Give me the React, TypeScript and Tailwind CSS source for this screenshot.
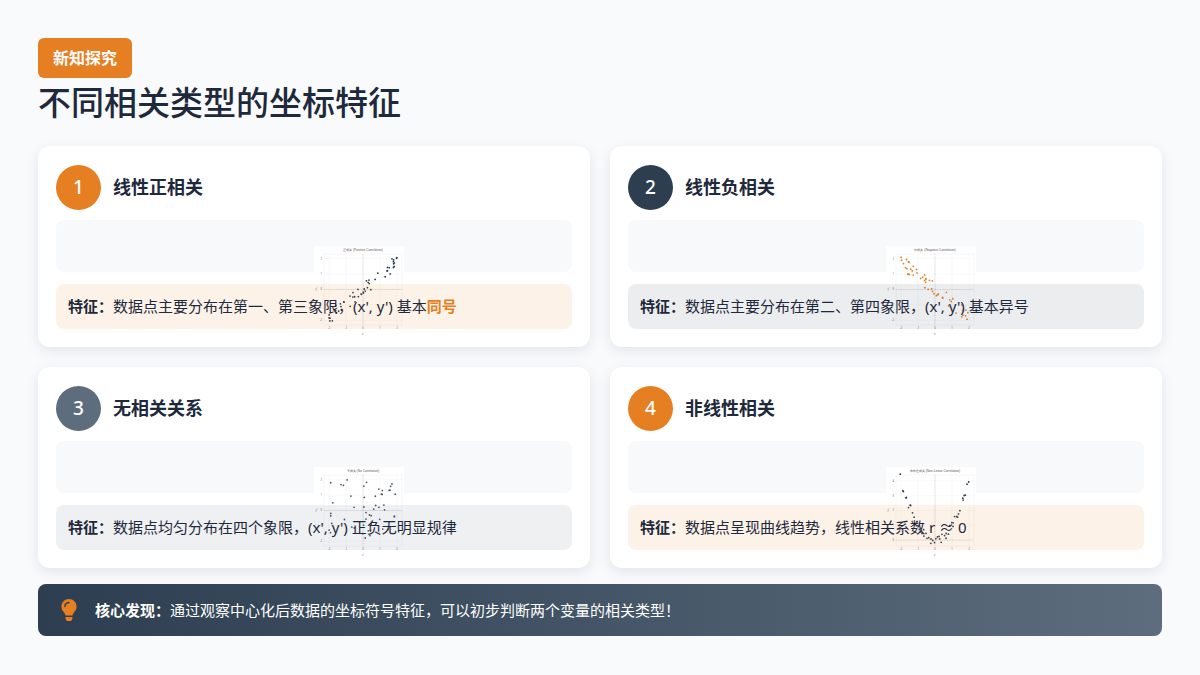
import { FaLightbulb } from "react-icons/fa";

type Kind = "pos" | "neg" | "none" | "curve";

function seeded(seed: number) {
  let s = seed;
  return () => {
    s = (s * 16807) % 2147483647;
    return (s - 1) / 2147483646;
  };
}

function makePoints(kind: Kind) {
  const r = seeded(kind === "pos" ? 11 : kind === "neg" ? 29 : kind === "none" ? 47 : 83);
  const pts: [number, number][] = [];
  for (let i = 0; i < 50; i++) {
    if (kind === "curve") {
      const x = -2 + 4 * (i / 49) + (r() - 0.5) * 0.1;
      pts.push([x, x * x + (r() - 0.5) * 0.6]);
    } else if (kind === "none") {
      pts.push([-2 + 4 * r(), -2 + 4 * r()]);
    } else {
      const x = -2 + 4 * r();
      const y = (kind === "pos" ? 0.9 : -0.9) * x + (r() - 0.5) * 0.9;
      pts.push([x, y]);
    }
  }
  return pts;
}

const titles: Record<Kind, string> = {
  pos: "正相关 (Positive Correlation)",
  neg: "负相关 (Negative Correlation)",
  none: "无相关 (No Correlation)",
  curve: "非线性相关 (Non-Linear Correlation)",
};

function Scatter({ kind }: { kind: Kind }) {
  const pts = makePoints(kind);
  const [ymin, ymax] = kind === "curve" ? [-0.4, 4.4] : [-2.3, 2.3];
  const px = (x: number) => 10 + ((x + 2.3) / 4.6) * 78;
  const py = (y: number) => 79 - ((y - ymin) / (ymax - ymin)) * 71;
  const dot = kind === "neg" ? "#e67e22" : kind === "none" ? "#4a5a6b" : "#2c3e50";
  const ticks = [-2, -1, 0, 1, 2];
  const yticks = kind === "curve" ? [0, 1, 2, 3, 4] : ticks;
  return (
    <svg width="90" height="90" viewBox="0 0 90 90" className="block">
      <rect x="0" y="0" width="90" height="90" fill="#ffffff" />
      <text x="49" y="5" fontSize="3.2" fill="#555" textAnchor="middle" fontFamily="'Liberation Sans', sans-serif">
        {titles[kind]}
      </text>
      <rect x="10" y="8" width="78" height="71" fill="none" stroke="#e5e5e5" strokeWidth="0.3" />
      {ticks.map((t) => (
        <g key={"x" + t}>
          <line x1={px(t)} y1="8" x2={px(t)} y2="79" stroke="#eeeeee" strokeWidth="0.3" />
          <text x={px(t)} y="83" fontSize="2.6" fill="#666" textAnchor="middle">{t}</text>
        </g>
      ))}
      {yticks.map((t) => (
        <g key={"y" + t}>
          <line x1="10" y1={py(t)} x2="88" y2={py(t)} stroke="#eeeeee" strokeWidth="0.3" />
          <text x="8" y={py(t) + 0.9} fontSize="2.6" fill="#666" textAnchor="end">{t}</text>
        </g>
      ))}
      <line x1={px(0)} y1="8" x2={px(0)} y2="79" stroke="#999" strokeWidth="0.35" strokeDasharray="1 0.7" />
      <line x1="10" y1={py(0)} x2="88" y2={py(0)} stroke="#999" strokeWidth="0.35" strokeDasharray="1 0.7" />
      {pts.map(([x, y], i) => (
        <circle key={i} cx={px(x)} cy={py(y)} r="0.9" fill={dot} />
      ))}
      <text x={px(0)} y="88.5" fontSize="2.6" fill="#666" textAnchor="middle">x'</text>
      <text x="1.5" y={py(kind === "curve" ? 2 : 0)} fontSize="2.6" fill="#666">y'</text>
    </svg>
  );
}

interface CardProps {
  num: string;
  circle: string;
  title: string;
  kind: Kind;
  tint: string;
  children: React.ReactNode;
}

function Card({ num, circle, title, kind, tint, children }: CardProps) {
  return (
    <div className="bg-white rounded-xl p-[18px] shadow-[0_4px_14px_rgba(15,23,42,0.09)]">
      <div className="flex items-center h-[46px]">
        <div className={`w-[45px] h-[45px] rounded-full flex items-center justify-center text-white text-[19px] font-medium ${circle}`}>
          {num}
        </div>
        <h3 className="ml-3 text-[18px] font-bold text-[#1e293b]">{title}</h3>
      </div>
      <div className="relative mt-[10px] h-[52px] rounded-lg bg-[#f8f9fb]">
        <div className="absolute left-1/2 top-1/2 z-10">
          <Scatter kind={kind} />
        </div>
      </div>
      <div className={`relative z-20 mt-3 h-[45px] rounded-lg px-3 flex items-center text-[15px] text-[#1e293b] ${tint}`}>
        <p>
          <span className="font-bold">特征：</span>
          {children}
        </p>
      </div>
    </div>
  );
}

export default function App() {
  return (
    <div
      className="w-[1200px] h-[675px] overflow-hidden bg-[#f8fafc] px-[38px] pt-[38px]"
      style={{ fontFamily: "'Noto Sans', 'Noto Sans CJK SC', sans-serif" }}
    >
      <span className="inline-block rounded-md bg-[#e67e22] px-[15px] py-2 text-[16px] leading-6 font-bold text-white">
        新知探究
      </span>
      <h1 className="mt-[4px] text-[33px] leading-[42px] font-medium text-[#1e293b]">不同相关类型的坐标特征</h1>

      <div className="mt-[22px] grid grid-cols-2 gap-5">
        <Card num="1" circle="bg-[#e67e22]" title="线性正相关" kind="pos" tint="bg-[#e67e22]/10">
          数据点主要分布在第一、第三象限，(x', y') 基本<span className="font-bold text-[#e67e22]">同号</span>
        </Card>
        <Card num="2" circle="bg-[#2c3e50]" title="线性负相关" kind="neg" tint="bg-[#5d6d7e]/[0.12]">
          数据点主要分布在第二、第四象限，(x', y') 基本异号
        </Card>
        <Card num="3" circle="bg-[#5d6d7e]" title="无相关关系" kind="none" tint="bg-[#5d6d7e]/[0.1]">
          数据点均匀分布在四个象限，(x', y') 正负无明显规律
        </Card>
        <Card num="4" circle="bg-[#e67e22]" title="非线性相关" kind="curve" tint="bg-[#e67e22]/10">
          数据点呈现曲线趋势，线性相关系数 r ≈ 0
        </Card>
      </div>

      <div className="mt-4 h-[52px] rounded-lg bg-gradient-to-r from-[#2c3e50] to-[#5d6d7e] flex items-center pl-[20px] text-[15px] text-white">
        <FaLightbulb className="text-[#e67e22]" size={22} />
        <p className="ml-[15px]">
          <span className="font-bold">核心发现：</span>
          通过观察中心化后数据的坐标符号特征，可以初步判断两个变量的相关类型！
        </p>
      </div>
    </div>
  );
}
